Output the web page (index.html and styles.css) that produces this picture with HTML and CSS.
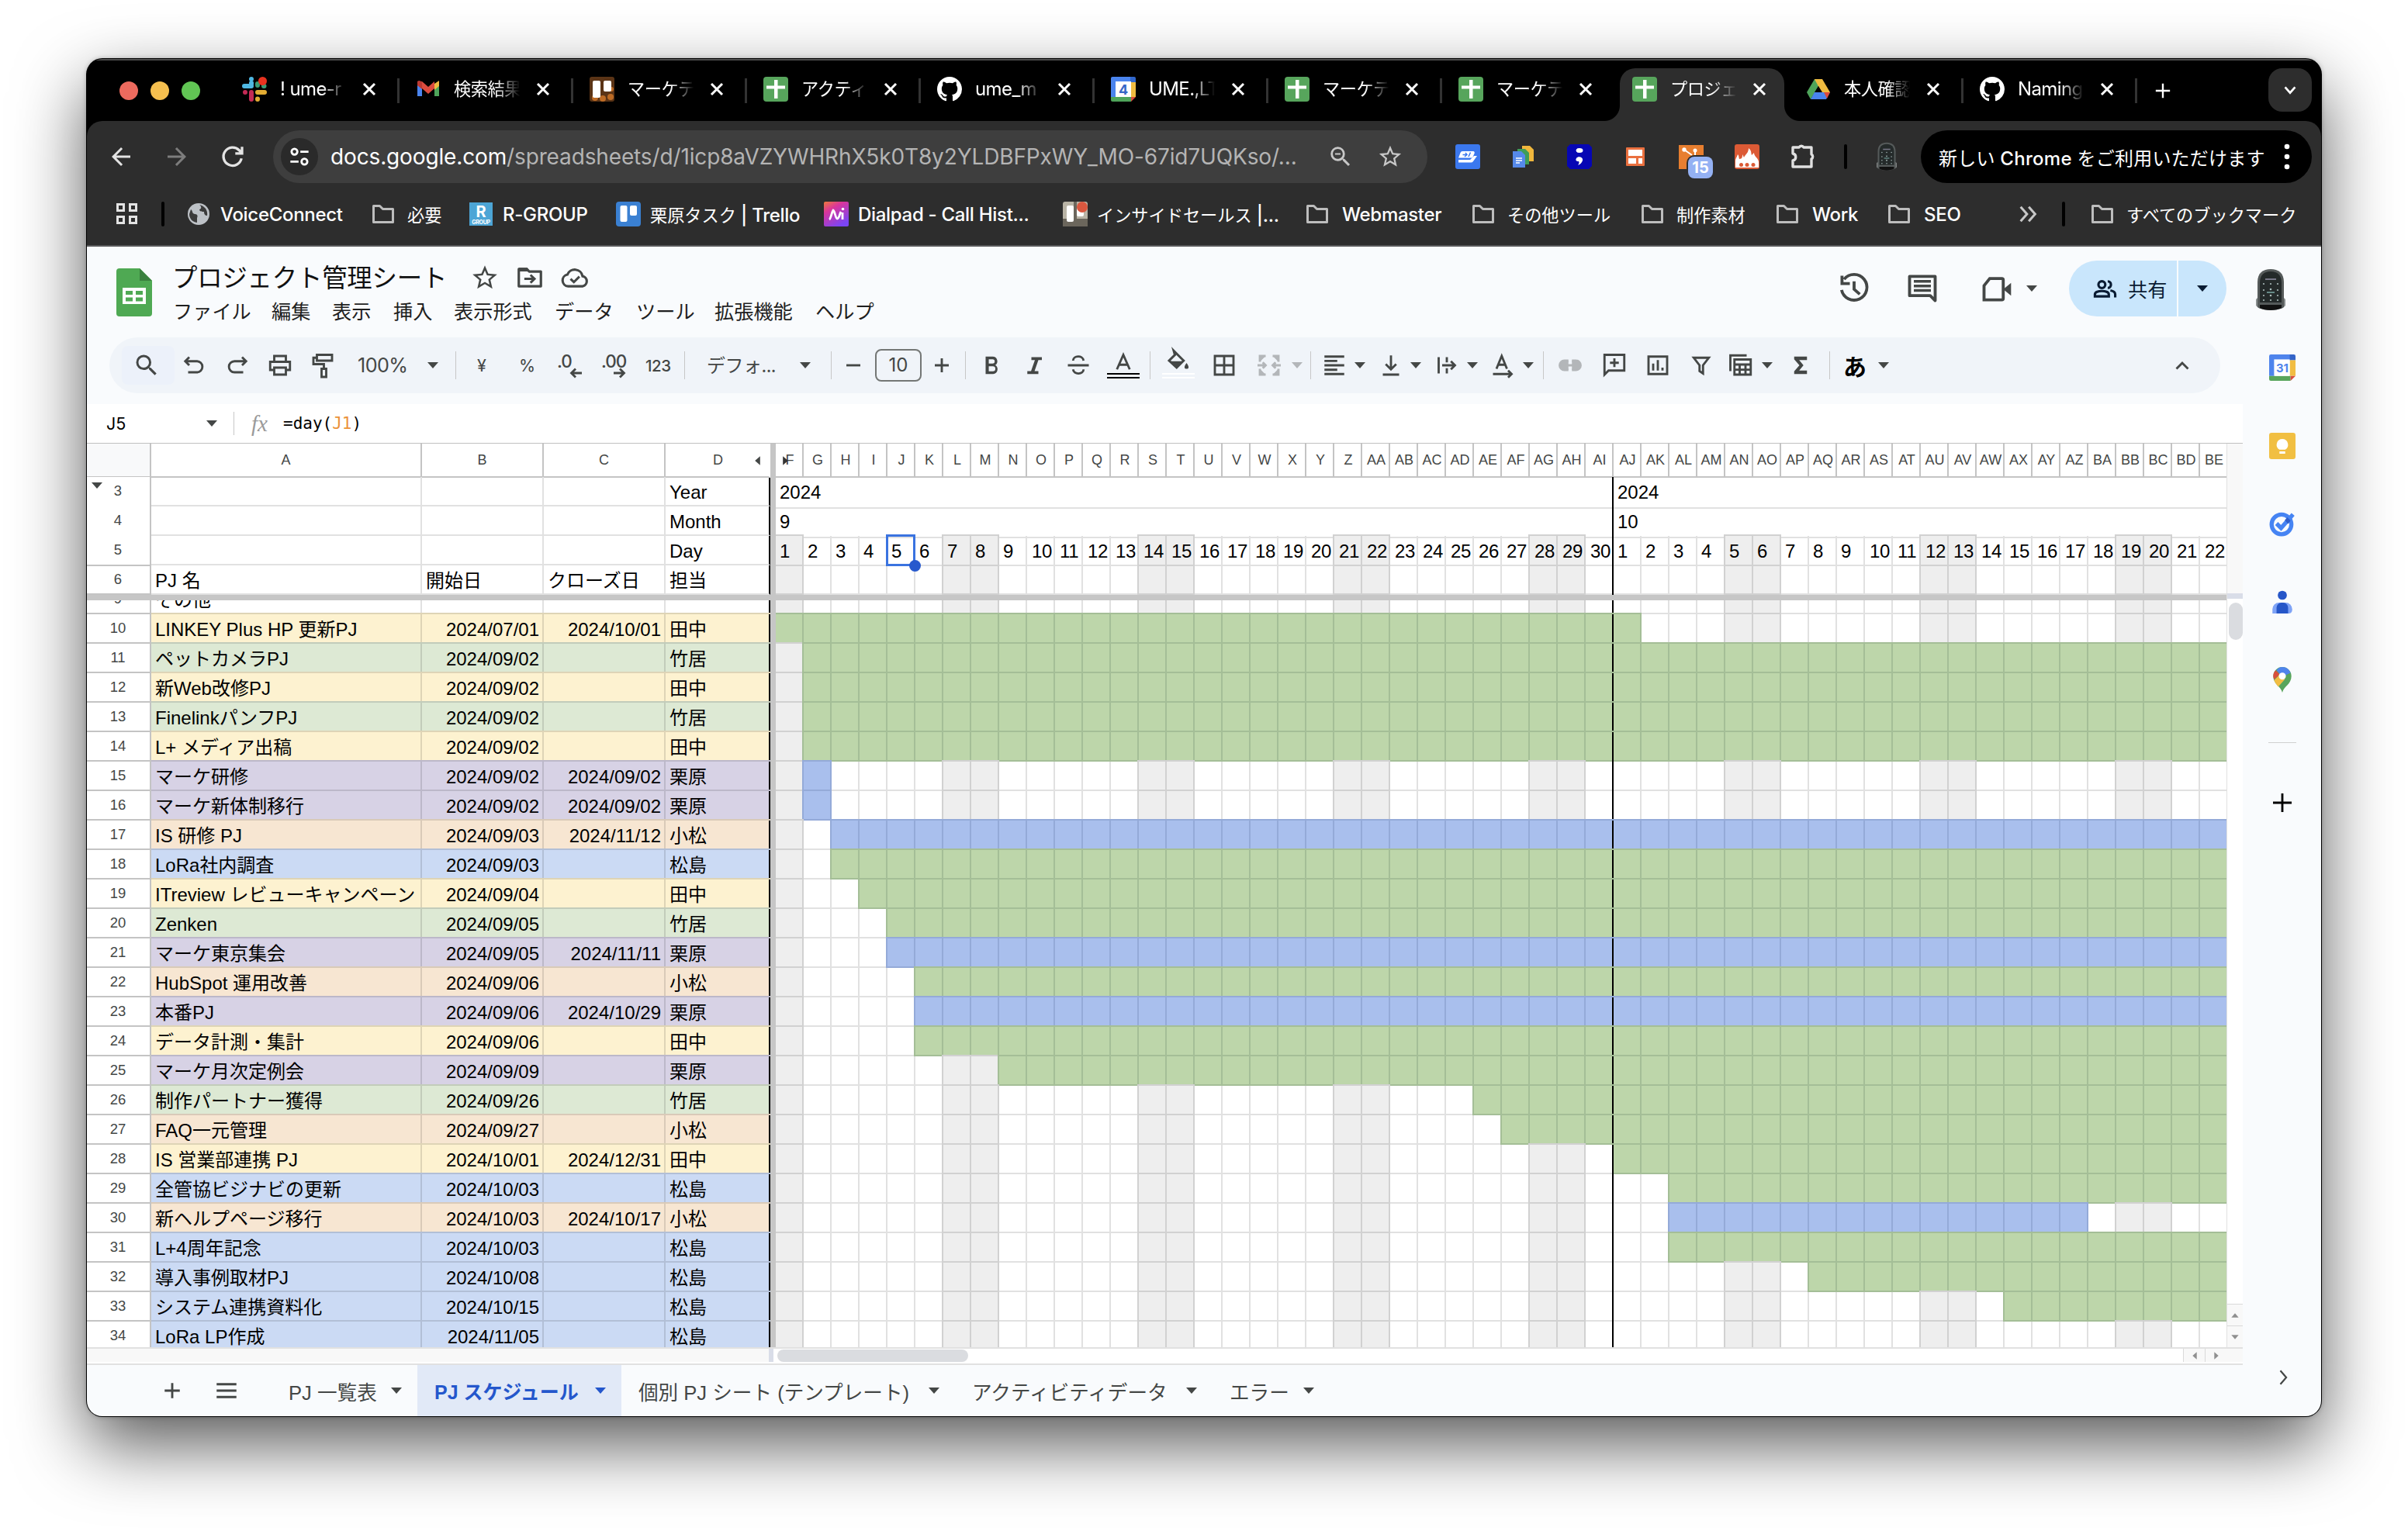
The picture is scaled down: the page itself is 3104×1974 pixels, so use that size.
FILE: index.html
```html
<!DOCTYPE html>
<html lang="ja">
<head>
<meta charset="utf-8">
<title>プロジェクト管理シート</title>
<link rel="stylesheet" href="styles.css">
</head>
<body>
<svg class="sprite" aria-hidden="true">
  <symbol id="caret" viewBox="0 0 18 18"><path d="M2 5h14l-7 8z"/></symbol>
  <symbol id="close" viewBox="0 0 24 24"><path d="M5 5l14 14M19 5L5 19" fill="none" stroke="currentColor" stroke-width="3"/></symbol>
  <symbol id="plus" viewBox="0 0 24 24"><path d="M12 2v20M2 12h20" fill="none" stroke="currentColor" stroke-width="2.6"/></symbol>
  <symbol id="sheets" viewBox="0 0 32 32"><rect width="32" height="32" rx="4" fill="#57a55c"/><path d="M14 4h4.500v24h-4.500zM4 11.500h24v4h-24z" fill="#fff"/></symbol>
  <symbol id="github" viewBox="0 0 16 16"><path fill="#fff" d="M8 0C3.58 0 0 3.58 0 8c0 3.54 2.29 6.53 5.47 7.59.4.07.55-.17.55-.38 0-.19-.01-.82-.01-1.490-2.010.37-2.530-.49-2.690-.94-.09-.23-.48-.94-.82-1.130-.28-.15-.68-.52-.01-.53.63-.01 1.080.58 1.230.82.72 1.210 1.870.87 2.330.66.07-.52.28-.87.51-1.070-1.780-.2-3.640-.89-3.640-3.950 0-.87.31-1.590.82-2.150-.08-.2-.36-1.020.08-2.120 0 0 .67-.21 2.200.82.64-.18 1.320-.27 2-.27.68 0 1.360.09 2 .27 1.530-1.040 2.200-.82 2.200-.82.44 1.100.16 1.920.08 2.120.51.56.82 1.270.82 2.150 0 3.070-1.870 3.750-3.650 3.950.29.25.54.73.54 1.480 0 1.070-.01 1.930-.01 2.200 0 .21.15.46.55.38A8.013 8.013 0 0 0 16 8c0-4.420-3.580-8-8-8z"/></symbol>
  <symbol id="folder" viewBox="0 0 32 32"><path d="M3.500 5.500h8l4 4h13v17h-25z" fill="none" stroke="#bdbdbd" stroke-width="3" stroke-linejoin="round"/></symbol>
  <symbol id="search" viewBox="0 0 24 24"><path d="M15.500 14h-.79l-.28-.27A6.471 6.471 0 0 0 16 9.500 6.500 6.500 0 1 0 9.500 16c1.610 0 3.090-.59 4.230-1.570l.27.28v.79l5 4.990L20.490 19l-4.990-5zm-6 0C7.010 14 5 11.990 5 9.500S7.010 5 9.500 5 14 7.010 14 9.500 11.990 14 9.500 14z"/></symbol>
  <symbol id="star" viewBox="0 0 24 24"><path d="M22 9.240l-7.190-.62L12 2 9.190 8.630 2 9.240l5.460 4.730L5.820 21 12 17.270 18.180 21l-1.630-7.030L22 9.240zM12 15.400l-3.760 2.270 1-4.280-3.320-2.880 4.380-.38L12 6.100l1.710 4.040 4.380.38-3.320 2.880 1 4.280L12 15.400z"/></symbol>
  <symbol id="back" viewBox="0 0 24 24"><path d="M20 11H7.830l5.590-5.590L12 4l-8 8 8 8 1.410-1.410L7.830 13H20v-2z"/></symbol>
  <symbol id="lock" viewBox="0 0 40 56"><path d="M3 50V18C3 6 10 1 20 1s17 5 17 17v32c-6 5-28 5-34 0z" fill="#555a5a"/><path d="M1 40l2-2v12l-2-2zM39 40l-2-2v12l2-2z" fill="#8a8f8f"/><path d="M6 44V19C6 9 11 4 20 4s14 5 14 15v25z" fill="#242a2a"/><path d="M6 47h28v4c-6 4-22 4-28 0z" fill="#111"/><path d="M13 14h14" stroke="#778" stroke-width="2"/><g fill="#a9bab9"><circle cx="11" cy="20" r="1.100"/><circle cx="20" cy="20" r="1.100"/><circle cx="29" cy="20" r="1.100"/><circle cx="11" cy="28" r="1.100"/><circle cx="20" cy="27" r="1.300"/><circle cx="29" cy="28" r="1.100"/><circle cx="11" cy="35" r="1.100"/><circle cx="20" cy="35" r="1.300"/><circle cx="29" cy="35" r="1.100"/><circle cx="11" cy="41" r="1.100"/><circle cx="20" cy="41" r="1.100"/><circle cx="29" cy="41" r="1.100"/></g><path d="M15 31h10" stroke="#7dada8" stroke-width="1.500"/></symbol>
  <symbol id="trello" viewBox="0 0 32 32"><rect width="32" height="32" rx="4" fill="#3a80d2"/><rect x="5.500" y="5" width="9" height="21" rx="2" fill="#fff"/><rect x="18" y="5" width="9" height="13" rx="2" fill="#fff"/></symbol>
</svg>

<div class="window">
  <div class="tabstrip">
    <div class="lights"><i class="red"></i><i class="amber"></i><i class="green"></i></div>
    <div class="tabs">
      <div class="tab">
        <svg viewBox="0 0 32 32"><g stroke-width="6" stroke-linecap="round"><path d="M12 3v0M3 12h9" stroke="#4fb8e3"/><path d="M12 8v1" stroke="#4fb8e3"/><path d="M20 9v2" stroke="#3b9b74"/><path d="M28 12h.5" stroke="#3b9b74"/><path d="M12 20v9M4 20h0" stroke="#c42a55"/><path d="M20 20h9M20 28.500v.5" stroke="#e3ac33"/></g><circle cx="26.500" cy="5.500" r="5.500" fill="#e8321f"/></svg>
        <span class="title">! ume-r</span><svg class="x"><use href="#close"/></svg></div>
      <div class="tab">
        <svg viewBox="0 0 32 32"><path d="M2 7v18h6V12z" fill="#4a84ee"/><path d="M30 7v18h-6V12z" fill="#4ea45a"/><path d="M2 7l6-1 8 7 8-7v9l-8 7-8-7-6-4z" fill="#dd4b3e"/><path d="M24 9l6-4v7l-6 5z" fill="#f0bb40"/><path d="M2 6c2-2 4-1 6 1v9l-6-5z" fill="#bb3a32"/></svg>
        <span class="title jp">検索結果</span><svg class="x"><use href="#close"/></svg></div>
      <div class="tab">
        <svg viewBox="0 0 32 32"><rect width="32" height="32" rx="3" fill="#5b3416"/><g fill="#bd6b25"><circle cx="7" cy="27" r="4"/><circle cx="17" cy="28" r="4"/><circle cx="27" cy="26" r="4"/><circle cx="28" cy="16" r="3"/></g><rect x="4" y="5" width="10" height="22" rx="2" fill="#fff"/><rect x="18" y="5" width="10" height="14" rx="2" fill="#fff"/></svg>
        <span class="title jp">マーケテ</span><svg class="x"><use href="#close"/></svg></div>
      <div class="tab"><svg><use href="#sheets"/></svg><span class="title jp">アクティ</span><svg class="x"><use href="#close"/></svg></div>
      <div class="tab"><svg><use href="#github"/></svg><span class="title">ume_m</span><svg class="x"><use href="#close"/></svg></div>
      <div class="tab">
        <svg viewBox="0 0 32 32"><path d="M0 2a2 2 0 0 1 2-2h24v7H7v19H0z" fill="#4a84ee"/><path d="M25 0h5a2 2 0 0 1 2 2v5h-7z" fill="#3167cc"/><path d="M25 7h7v19h-7z" fill="#f0bb40"/><path d="M0 26h26v6H2a2 2 0 0 1-2-2z" fill="#4ea45a"/><path d="M26 26h6l-6 6z" fill="#dd4b3e"/><path d="M6 6h20v20H6z" fill="#fff"/><text x="16" y="23" font-size="18" font-weight="700" text-anchor="middle" fill="#3767c6">4</text></svg>
        <span class="title">UME.,LT</span><svg class="x"><use href="#close"/></svg></div>
      <div class="tab"><svg><use href="#sheets"/></svg><span class="title jp">マーケテ</span><svg class="x"><use href="#close"/></svg></div>
      <div class="tab nosep"><svg><use href="#sheets"/></svg><span class="title jp">マーケテ</span><svg class="x"><use href="#close"/></svg></div>
      <div class="tab active nosep"><svg><use href="#sheets"/></svg><span class="title jp">プロジェ</span><svg class="x"><use href="#close"/></svg></div>
      <div class="tab">
        <svg viewBox="0 0 32 32"><path d="M11 3h10l-10 18-5 8-5-9z" fill="#4ea45a"/><path d="M11 3h10l10 17H20z" fill="#f0bb40"/><path d="M11 20h20l-5 9H6z" fill="#4a84ee"/><path d="M16 12l5 8H11z" fill="#000"/><path d="M23 20h8l-4 8z" fill="#dd4b3e"/></svg>
        <span class="title jp">本人確認</span><svg class="x"><use href="#close"/></svg></div>
      <div class="tab"><svg><use href="#github"/></svg><span class="title">Naming</span><svg class="x"><use href="#close"/></svg></div>
    </div>
    <svg class="newtab"><use href="#plus"/></svg>
    <div class="tabmenu"><svg viewBox="0 0 24 24"><path d="M5 8l7 8 7-8" fill="none" stroke="#fff" stroke-width="3"/></svg></div>
  </div>

  <div class="navbar">
    <svg class="nav"><use href="#back"/></svg>
    <svg class="nav fwd"><use href="#back"/></svg>
    <svg class="nav" viewBox="0 0 24 24"><path d="M19.500 13.500a7.800 7.800 0 1 1-2-7l2 2.200M20 3.500v5.800h-5.800" fill="none" stroke="#e3e3e3" stroke-width="2.200"/></svg>
    <div class="omnibox">
      <div class="siteinfo"><svg viewBox="0 0 24 24" fill="none" stroke="#fff" stroke-width="2.400"><circle cx="6.500" cy="6.500" r="3.200"/><path d="M13 6.500h9M2 17.500h9"/><circle cx="17.500" cy="17.500" r="3.200"/></svg></div>
      <div class="url"><b>docs.google.com</b>/spreadsheets/d/1icp8aVZYWHRhX5k0T8y2YLDBFPxWY_MO-67id7UQKso/...</div>
      <svg class="obicon" viewBox="0 0 24 24"><use href="#search"/><path d="M7 9.500h5" stroke="#c7c7c7" stroke-width="1.500"/></svg>
      <svg class="obicon"><use href="#star"/></svg>
    </div>
    <div class="exts">
      <svg viewBox="0 0 32 32"><rect width="32" height="32" rx="3" fill="#3b78ee"/><path d="M9 9h14a2 2 0 0 1 1.500 3L22 17.500H4L6.500 11A3 3 0 0 1 9 9z" fill="#fff"/><path d="M4 20h15l5-5h4l-5 7q-1 1.500-3 1.500H4z" fill="#fff"/><path d="M9.500 13.500h5M13 11l2 2.500-3 2.500M19.500 10.500L17 16" stroke="#3b78ee" stroke-width="1.500" fill="none"/></svg>
      <svg viewBox="0 0 32 32"><path d="M14 2h10l5 5v15H14z" fill="#f0b73c"/><path d="M8 6h10l5 5v15H8z" fill="#3f9d58"/><path d="M2 9h11l5 5v16H2z" fill="#5689ea"/><path d="M6 18h8M6 21h8M6 24h5" stroke="#fff" stroke-width="1.500"/></svg>
      <svg viewBox="0 0 32 32"><path d="M4 0h24l4 4v24l-4 4H4l-4-4V4z" fill="#0606b4"/><ellipse cx="16" cy="8" rx="4.500" ry="3" fill="#fff"/><path d="M12 18c2-3 9-2 8 3-1 3-3 5-6 6 2-3 2-5 0-5-3 0-3-2-2-4z" fill="#fff"/></svg>
      <svg viewBox="0 0 32 32"><rect x="4" y="4" width="24" height="24" rx="1" fill="#ea703f"/><path d="M7 7h18v8H7zM7 18h10v7H7zM20 18h5v7h-5z" fill="#fff"/></svg>
      <div class="badged"><svg viewBox="0 0 32 32"><path d="M0 1h32v31H0z" fill="#e77e2f"/><path d="M7 7l10 7M21 7v8" stroke="#fff" stroke-width="2"/><circle cx="7" cy="7" r="2.700" fill="#fff"/><circle cx="21" cy="8" r="2.500" fill="#fff"/></svg><span class="badge">15</span></div>
      <svg viewBox="0 0 32 32"><rect width="32" height="32" rx="3" fill="#dc5a35"/><path d="M1 30V22c0-4 2-5 3-9 2 2 1 4 2 6 4 0 4-3 4-6l2 4c2-4 6-6 6-12 4 3 3 6 4 9l3-3c0 5 6 7 6 12v7z" fill="#fff"/><g fill="#dc5a35"><circle cx="8.500" cy="26.500" r="2.500"/><circle cx="16" cy="26.500" r="2.500"/><circle cx="24" cy="26.500" r="2.500"/></g></svg>
      <svg viewBox="0 0 32 32"><path d="M3 4h8a3.500 3.500 0 0 1 6 0h10v9a3.500 3.500 0 0 1 0 6v10H3v-8c5-1 5-8 0-9z" fill="none" stroke="#e0e0e0" stroke-width="3.400" stroke-linejoin="round"/></svg>
      <i class="vsep"></i>
      <svg class="lock"><use href="#lock"/></svg>
    </div>
    <div class="update"><span><em>新しい</em> Chrome <em>をご利用いただけます</em></span><svg viewBox="0 0 8 40" fill="#fff"><circle cx="4" cy="7" r="3.300"/><circle cx="4" cy="20" r="3.300"/><circle cx="4" cy="33" r="3.300"/></svg></div>
  </div>

  <div class="bookmarks">
    <svg class="apps" viewBox="0 0 28 28" fill="none" stroke="#e3e3e3" stroke-width="3"><path d="M1.500 1.500h8v8h-8zM17.500 1.500h8v8h-8zM1.500 17.500h8v8h-8zM17.500 17.500h8v8h-8z"/></svg>
    <i class="vsep"></i>
    <div class="bm"><svg viewBox="0 0 32 32"><circle cx="16" cy="16" r="14" fill="#bdc1c6"/><path d="M6 10c3 2 1 5 5 6 4 0 4 3 3 5v6c-6-1-10-5-10-11zM17 4c3 2 3 5 0 6 0 3 4 3 6 3 0 4 2 5 4 5 1-6-2-12-10-14z" fill="#3b3b3b"/></svg>VoiceConnect</div>
    <div class="bm jp"><svg><use href="#folder"/></svg>必要</div>
    <div class="bm"><svg viewBox="0 0 32 32"><rect x="1" y="1" width="30" height="30" fill="#4ca5d6"/><text x="16" y="20" font-size="20" font-weight="700" text-anchor="middle" fill="#fff">R</text><text x="16" y="29" font-size="7" font-weight="700" text-anchor="middle" fill="#fff">GROUP</text></svg>R-GROUP</div>
    <div class="bm"><svg><use href="#trello"/></svg><span><em>栗原タスク</em> | Trello</span></div>
    <div class="bm"><svg viewBox="0 0 32 32"><defs><linearGradient id="dp" x1="0" y1="0" x2=".6" y2="1"><stop offset="0" stop-color="#ef7a3a"/><stop offset=".35" stop-color="#d9359b"/><stop offset="1" stop-color="#7b45f5"/></linearGradient></defs><rect width="32" height="32" rx="2" fill="url(#dp)"/><path d="M7 23c2-1 3-9 5-12 2 0 3 11 5 11 3 0 3-6 5-9M24 14v9" fill="none" stroke="#fff" stroke-width="2.800"/><circle cx="24.500" cy="9.500" r="1.800" fill="#fff"/></svg><span>Dialpad - Call Hist...</span></div>
    <div class="bm"><svg viewBox="0 0 32 32"><rect width="32" height="32" rx="3" fill="#b9b4a6"/><path d="M0 22h32v10H0zM14 0h4v22h-4z" fill="#6b665c"/><rect x="5" y="5" width="9" height="21" rx="2" fill="#fff"/><rect x="18" y="8" width="9" height="11" rx="2" fill="#fff"/><circle cx="25" cy="7" r="7" fill="#d9573f"/></svg><span><em>インサイドセールス</em> |...</span></div>
    <div class="bm dir"><svg><use href="#folder"/></svg>Webmaster</div>
    <div class="bm jp"><svg><use href="#folder"/></svg>その他ツール</div>
    <div class="bm jp"><svg><use href="#folder"/></svg>制作素材</div>
    <div class="bm dir"><svg><use href="#folder"/></svg>Work</div>
    <div class="bm dir"><svg><use href="#folder"/></svg>SEO</div>
    <svg class="more" viewBox="0 0 24 24"><path d="M4 4l7 8-7 8M13 4l7 8-7 8" fill="none" stroke="#c7c7c7" stroke-width="2.600"/></svg>
    <i class="vsep"></i>
    <div class="bm jp"><svg><use href="#folder"/></svg>すべてのブックマーク</div>
  </div>

  <div class="app">
    <div class="header">
      <svg class="logo" viewBox="0 0 46 62"><path d="M4 0h26l16 16v42a4 4 0 0 1-4 4H4a4 4 0 0 1-4-4V4a4 4 0 0 1 4-4z" fill="#4fa953"/><path d="M30 0l16 16H30z" fill="#3a803e"/><path d="M8 25h30v21H8zM12 29v5h9v-5zM25 29v5h9v-5zM12 37.500v5h9v-5zM25 37.500v5h9v-5z" fill="#fff" fill-rule="evenodd"/></svg>
      <div class="names">
        <div class="doc"><span class="docname">プロジェクト管理シート</span>
          <svg><use href="#star"/></svg>
          <svg viewBox="0 0 24 24"><path d="M3 5h6.500l2 2H21v12H3z" fill="none" stroke="#444746" stroke-width="2" stroke-linejoin="round"/><path d="M3 4h7l2 3H3z"/><path d="M7.500 13h8M12.500 9.800l3.300 3.200-3.300 3.200" fill="none" stroke="#444746" stroke-width="1.900"/></svg>
          <svg viewBox="0 0 24 24"><path d="M6.500 19a4.800 4.800 0 0 1-.6-9.500 6.500 6.500 0 0 1 12.400 1.300A4.200 4.200 0 0 1 18.500 19z" fill="none" stroke="#444746" stroke-width="2"/><path d="M8.500 13l2.700 2.600 4.500-4.500" fill="none" stroke="#444746" stroke-width="1.900"/></svg>
        </div>
        <div class="menu"><span>ファイル</span><span>編集</span><span>表示</span><span>挿入</span><span>表示形式</span><span>データ</span><span>ツール</span><span>拡張機能</span><span>ヘルプ</span></div>
      </div>
      <div class="actions">
        <svg viewBox="0 0 24 24" fill="none" stroke="#444746" stroke-width="2.100"><path d="M5 5.500A9 9 0 1 1 3.200 13M3.500 3v5.500H9M12 7v5.500l4 3.500"/></svg>
        <svg viewBox="0 0 24 24"><path d="M3 3.500h18v17L17.500 17H3z" fill="none" stroke="#444746" stroke-width="2.100" stroke-linejoin="round"/><path d="M6 7h12M6 10.200h12M6 13.400h12" stroke="#444746" stroke-width="1.900"/></svg>
        <svg viewBox="0 0 24 24"><path d="M7 5h8.500a1 1 0 0 1 1 1v13a1 1 0 0 1-1 1H3V10z" fill="none" stroke="#444746" stroke-width="2.100"/><path d="M16.500 12.500L22 8v9z"/></svg>
        <svg class="caret"><use href="#caret"/></svg>
        <div class="share"><div class="sharebtn"><svg viewBox="0 0 24 24" fill="none" stroke="#0a1c33" stroke-width="2.300"><circle cx="9" cy="8" r="3.200"/><path d="M2.500 19v-2c0-4 13-4 13 0v2zM14.500 4.900c4 0 4 6.200 0 6.200M17 13.500c3 .6 4.500 1.700 4.500 3.500v3"/></svg>共有</div><div class="sharemore"><svg class="caret"><use href="#caret"/></svg></div></div>
        <svg class="avatar"><use href="#lock"/></svg>
      </div>
    </div>

    <div class="body">
      <div class="main">
        <div class="toolbar">
          <span class="hit"><svg><use href="#search"/></svg></span>
          <svg viewBox="0 0 24 24" class="ln"><path d="M8 5L4.500 8.500 8 12M5 8.500h9.500a4.700 4.700 0 0 1 0 9.500H7"/></svg>
          <svg viewBox="0 0 24 24" class="ln"><path d="M16 5l3.500 3.500L16 12M19 8.500H9.500a4.700 4.700 0 0 0 0 9.500H17"/></svg>
          <svg viewBox="0 0 24 24" class="ln"><path d="M7 8V4h10v4M7 16H3.500V9h17v7H17M7 14h10v6H7z"/></svg>
          <svg viewBox="0 0 24 24" class="ln"><path d="M7 3h13v5H7zM7 5.500H4V11h9v4M11 15h4v7h-4z"/></svg>
          <span class="t zoom">100%</span>
          <svg class="caret"><use href="#caret"/></svg>
          <i class="sep"></i>
          <span class="t sm">¥</span><span class="t sm">%</span>
          <span class="dec">.0<svg viewBox="0 0 16 14" class="ln"><path d="M16 7H3M8 1.500L2.500 7 8 12.500"/></svg></span>
          <span class="dec">.00<svg viewBox="0 0 16 14" class="ln"><path d="M0 7h13M8 1.500L13.500 7 8 12.500"/></svg></span>
          <span class="t num">123</span>
          <i class="sep"></i>
          <span class="t font">デフォ...</span>
          <svg class="caret"><use href="#caret"/></svg>
          <i class="sep"></i>
          <svg viewBox="0 0 24 24" class="ln"><path d="M6 12h12"/></svg>
          <span class="size">10</span>
          <svg viewBox="0 0 24 24" class="ln"><path d="M6 12h12M12 6v12"/></svg>
          <i class="sep"></i>
          <svg viewBox="0 0 24 24"><path d="M7 4.500h6a4 4 0 0 1 2.300 7.300A4.200 4.200 0 0 1 13.500 19.500H7zm2.700 2.400v3.600H13a1.800 1.800 0 0 0 0-3.600zm0 5.900v4.300h3.500a2.150 2.150 0 0 0 0-4.300z"/></svg>
          <svg viewBox="0 0 24 24"><path d="M9 5h9v2.500h-3l-3.300 9.500H15v2.500H5.500V17h3.200L12 7.500H9z"/></svg>
          <svg viewBox="0 0 24 24" class="ln"><path d="M3 12h18M16.500 8c-.6-5-9-4.500-9 0M7.500 15.500c.5 5 9 4.500 9 0"/></svg>
          <span class="fill"><svg viewBox="0 0 24 24" class="ln"><path d="M6.500 21.500L12 9l5.500 12.500M8.500 17.500h7"/></svg><i></i><i></i></span>
          <i class="sep"></i>
          <span class="fill white"><svg viewBox="0 0 24 24"><g transform="translate(0 3.500)"><path d="M8 2l8.500 8.500-6 6L4 10.500 9 5.500z" fill="none" stroke="#444746" stroke-width="2"/><path d="M5 11h11l-5.500 5.500zM19 12.500c3 4 1.500 5 0 5s-3-1 0-5z"/></g></svg><i></i><i></i></span>
          <svg viewBox="0 0 24 24" class="ln"><path d="M4 4h16v16H4zM12 4v16M4 12h16"/></svg>
          <svg viewBox="0 0 24 24" class="ln off"><path d="M9 4H4v5M15 4h5v5M9 20H4v-5M15 20h5v-5M2 12h7M6.500 9.500L9 12l-2.500 2.500M22 12h-7M17.500 9.500L15 12l2.500 2.500"/></svg>
          <svg class="caret off"><use href="#caret"/></svg>
          <i class="sep"></i>
          <svg viewBox="0 0 24 24" class="ln"><path d="M3.500 4.500h17M3.500 8.200h11M3.500 12h17M3.500 15.800h11M3.500 19.500h17"/></svg>
          <svg class="caret"><use href="#caret"/></svg>
          <svg viewBox="0 0 24 24" class="ln"><path d="M12 3.500v12M7.500 11l4.500 4.500 4.500-4.500M5 20h14"/></svg>
          <svg class="caret"><use href="#caret"/></svg>
          <svg viewBox="0 0 24 24" class="ln"><path d="M5 5v14M12 5v4.500M12 14.500V19M8 12h11M15.500 8.500L19 12l-3.500 3.500"/></svg>
          <svg class="caret"><use href="#caret"/></svg>
          <svg viewBox="0 0 24 24" class="ln"><path d="M6 15l4.500-11L15 15M7.500 11.500h6M3 19.500h16M16 16.500l3 3-3 3"/></svg>
          <svg class="caret"><use href="#caret"/></svg>
          <i class="sep"></i>
          <svg viewBox="0 0 24 24" class="ln off"><path d="M10.500 8H7a4 4 0 0 0 0 8h3.500M13.500 8H17a4 4 0 0 1 0 8h-3.500M8.500 12h7"/></svg>
          <svg viewBox="0 0 24 24" class="ln"><path d="M3.500 20V3h17v13.500H7zM12 6v7.500M8.200 9.800h7.600"/></svg>
          <svg viewBox="0 0 24 24" class="ln"><path d="M4 4.500h16v15H4zM8 16.500v-6M12 16.500v-9M16 16.500v-2.500"/></svg>
          <svg viewBox="0 0 24 24" class="ln"><path d="M5.500 5.500h13L13.500 12v7l-3-2v-5z"/></svg>
          <svg viewBox="0 0 24 24" class="ln"><path d="M3 17V3.500h14M6.500 7h14v13h-14zM6.500 11.300h14M6.500 15.700h14M11 11.300V20M16 11.300V20"/></svg>
          <svg class="caret"><use href="#caret"/></svg>
          <svg viewBox="0 0 24 24"><path d="M6.500 4.500h11v3h-6.700L14.500 12l-3.700 4.500h6.700v3h-11v-2.300L11 12 6.500 6.800z"/></svg>
          <i class="sep"></i>
          <span class="t ime">あ</span>
          <svg class="caret"><use href="#caret"/></svg>
          <svg viewBox="0 0 24 24" class="ln"><path d="M7 15l5-5 5 5"/></svg>
        </div>

        <div class="formula"><span class="cellref">J5</span><svg class="caret"><use href="#caret"/></svg><i class="sep"></i><span class="fx">fx</span><span class="code">=day(<b>J1</b>)</span></div>

        <div class="sheet">
          <div class="grid">
            <div class="frozen" id="frozen"></div>
            <div class="freezebar"></div>
            <div class="scroller"><div id="rows"></div></div>
          </div>
          <div class="vscroll"><div class="vtop"></div><div class="handle"></div><div class="thumb"></div><div class="arrow"><svg class="up"><use href="#caret"/></svg></div><div class="arrow"><svg><use href="#caret"/></svg></div></div>
        </div>
        <div class="hscroll"><div class="hleft"></div><div class="handle"></div><div class="track"><div class="thumb"></div></div><div class="arrow"><svg class="left"><use href="#caret"/></svg></div><div class="arrow"><svg class="right"><use href="#caret"/></svg></div><div class="corner"></div></div>
      </div>
      <div class="side">
        <svg viewBox="0 0 32 32"><path d="M0 2a2 2 0 0 1 2-2h24v7H7v19H0z" fill="#4f84ec"/><path d="M25 0h5a2 2 0 0 1 2 2v5h-7z" fill="#3464c8"/><path d="M25 7h7v19h-7z" fill="#f1bd43"/><path d="M0 26h26v6H2a2 2 0 0 1-2-2z" fill="#58a55c"/><path d="M26 26h6l-6 6z" fill="#d94f3d"/><path d="M6 6h19v20H6z" fill="#fff"/><text x="16" y="21.500" font-size="14" font-weight="700" text-anchor="middle" fill="#4f84ec">31</text></svg>
        <svg viewBox="0 0 32 32"><rect width="32" height="32" rx="3" fill="#f1bf42"/><path d="M16 7.500a7 7 0 0 1 3.500 13h-7a7 7 0 0 1 3.500-13zM12.500 22.500h7v3h-7z" fill="#fff"/></svg>
        <svg viewBox="0 0 32 32"><circle cx="15" cy="17" r="12" fill="none" stroke="#4684f3" stroke-width="5"/><path d="M9 16l5.500 5.500L29 5" fill="none" stroke="#4684f3" stroke-width="5"/><path d="M22 8.500l4 4-3 4-4-4.500z" fill="#2f5ecb"/></svg>
        <svg viewBox="0 0 32 32"><circle cx="16" cy="8" r="5.500" fill="#2656c8"/><path d="M4 30v-5a8 8 0 0 1 8-8h8a8 8 0 0 1 8 8c0 3-1 5-4 5z" fill="#7fa3f6"/><path d="M9 30v-7a6 6 0 0 1 6-6h2a6 6 0 0 1 6 6v7z" fill="#2656c8"/></svg>
        <svg viewBox="0 0 32 32"><path d="M16 32c-2-8-11-10-11-20A11 11 0 0 1 16 1a11 11 0 0 1 11 11c0 10-9 12-11 20z" fill="#58a55c"/><path d="M16 1a11 11 0 0 1 10 7l-10 5-7-8c2-3 4-4 7-4z" fill="#4f84ec"/><path d="M8 5l5 5-7 6C4 12 5 8 8 5z" fill="#d94f3d"/><path d="M6 17l7-7 6 6-8 9c-2-3-4-5-5-8z" fill="#f1bd43"/><circle cx="16" cy="12" r="4.300" fill="#fff"/></svg>
        <hr>
        <svg class="add" viewBox="0 0 24 24"><path d="M12 0v24M0 12h24" stroke="#000" stroke-width="2.800"/></svg>
      </div>
    </div>

    <div class="sheettabs">
      <svg viewBox="0 0 24 24" class="ln"><path d="M12 5.500v13M5.500 12h13"/></svg>
      <svg viewBox="0 0 24 24" class="ln"><path d="M3.500 6.500h17M3.500 12h17M3.500 17.500h17"/></svg>
      <span class="st">PJ 一覧表<svg class="caret"><use href="#caret"/></svg></span>
      <span class="st on">PJ スケジュール<svg class="caret"><use href="#caret"/></svg></span>
      <span class="st">個別 PJ シート (テンプレート)<svg class="caret"><use href="#caret"/></svg></span>
      <span class="st">アクティビティデータ<svg class="caret"><use href="#caret"/></svg></span>
      <span class="st">エラー<svg class="caret"><use href="#caret"/></svg></span>
      <svg viewBox="0 0 24 24" class="ln expand"><path d="M9 4.500l6.500 7.500L9 19.500"/></svg>
    </div>
  </div>
</div>
<script src="sheet.js"></script>
</body>
</html>
```
FILE: styles.css
```css
* { box-sizing: border-box; }
body { margin: 0; height: 1974px; background: #fff; overflow: hidden; font-family: Inter, "Noto Sans CJK JP", sans-serif; }
em, b { font-style: normal; font-weight: inherit; }
svg { display: block; flex: none; }
.sprite { position: absolute; width: 0; height: 0; }

.window { width: 2880px; height: 1750px; margin: 76px 0 0 112px; border-radius: 20px; background: #000; overflow: hidden; display: flex; flex-direction: column; box-shadow: 0 0 0 1px #000, 0 0 6px rgba(0,0,0,.3), 0 36px 90px rgba(0,0,0,.66); }

/* browser tab strip */
.tabstrip { height: 80px; background: #000; border-top: 2px solid #4d4d4d; display: flex; align-items: flex-start; }
.lights { display: flex; gap: 16px; width: 178px; padding: 27px 0 0 42px; }
.lights i { width: 24px; height: 24px; border-radius: 50%; }
.red { background: #ed6a5e; }
.amber { background: #f5bf4f; }
.green { background: #61c554; }
.tabs { display: flex; }
.tab { width: 224px; height: 78px; padding: 0 0 4px 22px; display: flex; align-items: center; position: relative; color: #fff; }
.tab > svg { width: 32px; height: 32px; }
.tab::after { content: ""; position: absolute; right: -1px; top: 23px; width: 3px; height: 32px; background: #333; }
.tab.nosep::after { display: none; }
.tab .title { width: 88px; margin: 0 15px 0 17px; font-size: 24px; line-height: 34px; letter-spacing: -.6px; white-space: nowrap; -webkit-mask-image: linear-gradient(90deg, #000 62%, transparent 97%); mask-image: linear-gradient(90deg, #000 62%, transparent 97%); }
.tab .title.jp { font-size: 22.200px; letter-spacing: -.4px; }
.tab > .x { width: 24px; height: 24px; }
.tab.active::before { content: ""; position: absolute; z-index: 0; left: 6px; top: 10px; width: 212px; height: 68px; background: #2d2d2d; border-radius: 20px 20px 0 0; }
.tab.active::after { display: block; z-index: 0; left: -14px; right: auto; top: 58px; width: 252px; height: 20px; background: radial-gradient(circle at 0 0, transparent 19.500px, #2d2d2d 20.500px) 0 0 / 20px 20px no-repeat, radial-gradient(circle at 100% 0, transparent 19.500px, #2d2d2d 20.500px) 100% 0 / 20px 20px no-repeat; }
.tab.active > * { position: relative; z-index: 1; }
.newtab { width: 22px; height: 22px; color: #fff; margin: 28px 0 0 23px; }
.tabmenu { width: 56px; height: 56px; margin: 10px 12px 0 auto; border-radius: 18px; background: #2d2d2d; display: grid; place-items: center; }
.tabmenu svg { width: 22px; height: 22px; }

/* address row */
.navbar { height: 92px; display: flex; align-items: center; background: #2d2d2d; border-radius: 20px 20px 0 0; }
.nav { width: 36px; height: 36px; margin-right: 36px; fill: #e3e3e3; }
.nav:first-child { margin-left: 26px; }
.fwd { transform: scaleX(-1); fill: #7d7d7d; }
.nav:nth-child(3) { margin-right: 34px; }
.omnibox { width: 1488px; height: 68px; border-radius: 34px; background: #3e3e3e; display: flex; align-items: center; padding-left: 10px; }
.siteinfo { width: 48px; height: 48px; border-radius: 50%; background: #2a2a2a; display: grid; place-items: center; }
.siteinfo svg { width: 28px; height: 28px; }
.url { width: 1277px; padding-left: 16px; font-size: 28px; letter-spacing: -.14px; color: #b4b4b4; white-space: nowrap; }
.url b { color: #fff; }
.obicon { width: 34px; height: 34px; margin: 0 6px 0 24px; fill: #c7c7c7; }
.exts { display: flex; gap: 40px; margin-left: 36px; align-items: center; }
.exts svg { width: 32px; height: 32px; }
.exts .vsep { margin: 0 -3px; }
.exts .lock { width: 28px; height: 38px; }
.badged { position: relative; }
.badge { position: absolute; left: 12px; top: 16px; width: 32px; height: 28px; border-radius: 8px; background: #94b1f3; color: #fff; font: 700 20px/28px Inter, sans-serif; text-align: center; box-shadow: 0 0 0 2px #2d2d2d; }
.vsep { width: 4px; height: 32px; background: #000; border-radius: 2px; }
.update { width: 504px; height: 68px; margin-left: auto; margin-right: 12px; border-radius: 34px; background: #000; color: #fff; display: flex; align-items: center; padding-left: 23px; font-size: 24px; letter-spacing: .3px; font-weight: 500; white-space: nowrap; }
.update span { width: 445px; }
.update em { font-size: 24px; letter-spacing: .2px; font-weight: 400; }
.update svg { width: 8px; height: 40px; }

/* bookmarks */
.bookmarks { height: 70px; padding: 0 0 12px 38px; background: #2d2d2d; border-bottom: 2px solid #58585a; display: grid; align-items: center; grid-template-columns: 58px 32px 238px 126px 190px 268px 308px 312px 214px 218px 174px 144px 168px 58px 36px 1fr; color: #fff; }
.apps { width: 28px; height: 28px; }
.more { width: 28px; height: 28px; }
.bm { display: flex; align-items: center; gap: 12px; font-size: 24px; font-weight: 500; white-space: nowrap; letter-spacing: -.3px; }
.bm.dir { gap: 16px; }
.bm.jp { font-size: 22.200px; gap: 15px; font-weight: 400; letter-spacing: 0; }
.bm em { font-size: 22.200px; font-weight: 400; letter-spacing: 0; }
.bm svg { width: 32px; height: 32px; }

/* app header */
.app { flex: 1; background: #f9fbfd; display: flex; flex-direction: column; fill: #444746; }
.header { height: 117px; display: flex; font-family: "Noto Sans CJK JP", sans-serif; }
.logo { width: 46px; height: 62px; margin: 28px 28px 0 38px; }
.names { flex: 1; }
.doc { display: flex; align-items: center; height: 48px; margin-top: 14px; }
.docname { width: 384px; margin-left: -2px; font-size: 32.400px; line-height: 48px; letter-spacing: -.2px; color: #111; white-space: nowrap; }
.doc svg { width: 38px; height: 38px; margin-right: 20px; margin-top: 3px; }
.menu { display: grid; grid-template-columns: 127px 78px 79px 78px 130px 105px 101px 130px 90px; font-size: 25.200px; line-height: 40px; color: #1f1f1f; margin-left: -1px; }
.menu span { white-space: nowrap; }
.actions { display: flex; align-items: center; height: 108px; }
.actions > svg { width: 44px; height: 44px; margin-right: 44px; }
.actions > svg:nth-of-type(2) { margin-right: 52px; }
.actions > svg:nth-of-type(3) { margin-right: 14px; }
.actions > .caret { width: 18px; height: 18px; margin-right: 39px; }
.caret { width: 18px; height: 18px; }
.share { display: flex; width: 203px; height: 72px; border-radius: 36px; background: #c9e6fc; overflow: hidden; fill: #0a1c33; }
.sharebtn { width: 141px; border-right: 2px solid #f9fbfd; display: flex; align-items: center; gap: 13px; padding-left: 30px; font-size: 25.200px; color: #0a1c33; }
.sharebtn svg { width: 33px; height: 33px; }
.sharemore { padding: 27px 0 0 22px; }
.actions > .avatar { width: 42px; height: 56px; margin: 4px 44px 0 36px; }

.body { display: flex; height: 1325px; }
.main { width: 2779px; }
.toolbar { width: 2721px; height: 72px; margin: 0 0 14px 29px; padding-left: 30px; border-radius: 36px; background: #f0f4f9; display: grid; align-items: center; grid-template-columns: 61px 56px 55px 55px 63px 88px 38px 27px 54px 48px 57px 59px 50px 29px 118px 42px 11px 46px 68px 48px 16px 56px 56px 55px 55px 16px 62px 58px 45px 26px 13px 42px 31px 41px 31px 42px 31px 41px 28px 17px 57px 56px 56px 51px 43px 34px 55px 19px 42px 376px 36px; }
.toolbar svg { width: 36px; height: 36px; }
.toolbar .caret, .sheettabs .caret { width: 18px; height: 18px; }
.ln { fill: none; stroke: #444746; stroke-width: 1.900; }
.ln.off { stroke: #b3b6b9; }
.off { fill: #b3b6b9; }
.hit { width: 68px; height: 50px; margin-left: -14px; padding: 7px 14px; background: #ecf1fa; border-radius: 8px; }
.sep { width: 1px; height: 36px; background: #c7c7c7; }
.t { color: #444746; white-space: nowrap; font-size: 25.200px; }
.zoom { letter-spacing: -.6px; }
.sm { font-size: 21.500px; padding-left: 1px; }
.num { font-size: 20.500px; letter-spacing: -.5px; font-weight: 500; }
.font { font-family: "Noto Sans CJK JP", sans-serif; font-size: 24px; margin-top: -4px; letter-spacing: -.5px; }
.ime { font: 700 30px "Noto Sans CJK JP", sans-serif; color: #000; margin-left: -1px; }
.dec { position: relative; height: 52px; padding-left: 2px; font-size: 22.500px; line-height: 42px; font-weight: 500; letter-spacing: -1px; color: #444746; }
.toolbar .dec svg { width: 16px; height: 14px; position: absolute; left: 18px; top: 29px; stroke-width: 2.800; }
.size { width: 60px; height: 42px; border: 2px solid #747775; border-radius: 8px; text-align: center; font-size: 24px; line-height: 38px; color: #444746; }
.fill { width: 42px; height: 58px; display: flex; flex-direction: column; align-items: center; gap: 3px; }
.fill svg { margin: 2px 0 -2px; }
.fill i { width: 42px; height: 2px; background: #000; }
.fill.white i { background: #fff; }

.formula { height: 51px; background: #fff; border-bottom: 1px solid #c0c0c0; display: grid; grid-template-columns: 127px 37px 20px 43px 1fr; align-items: center; padding-left: 25px; font-size: 21.500px; color: #000; }
.fx { font: italic 29px "Liberation Serif", serif; color: #9a9a9a; padding-left: 3px; }
.formula .sep { height: 30px; }
.code { font-family: "DejaVu Sans Mono", monospace; font-size: 21px; padding-left: 1px; }
.code b { color: #eb9238; }

/* sheet */
.sheet { display: flex; height: 1165px; background: #fff; font-family: "Liberation Sans", "Noto Sans CJK JP", sans-serif; }
.grid { width: 2758px; overflow: hidden; position: relative; }
.scroller { height: 963px; overflow: hidden; }
#rows { margin-top: -20px; }
.freezebar { height: 7px; background: #c6c6c6; position: relative; z-index: 2; }
.row { display: grid; grid-template-columns: 83px 349px 157px 157px 135px 7px 1872px; height: 38px; }
.head { height: 43px; color: #444746; font-size: 18px; text-align: center; line-height: 42px; }
.head > div, .head .timeline span { border-right: 2px solid #c4c4c4; border-bottom: 2px solid #c4c4c4; background: #fff; }
.head > .timeline { border: 0; }
.head .corner { background: #f8f9fa; }
.head .timeline span { padding-left: 2px; font-size: 18px; color: #444746; white-space: nowrap; }
.head .d { position: relative; padding-left: 2px; border-right-color: #fff; }
.head .d svg { position: absolute; right: 7px; top: 14px; width: 15px; height: 16px; transform: rotate(90deg); }
.head .timeline { position: relative; }
.head .timeline svg { position: absolute; left: 5px; top: 14px; width: 15px; height: 16px; transform: rotate(-90deg); fill: #333; }
.rn { border-right: 2px solid #c4c4c4; border-bottom: 2px solid #c4c4c4; background: #fff; color: #444746; font-size: 18.500px; line-height: 36px; text-align: center; position: relative; padding-right: 1px; }
.rn svg { position: absolute; left: 4px; top: 2px; width: 18px; height: 18px; }
.cell { border-right: 2px solid #e1e1e1; border-bottom: 2px solid #e1e1e1; font-size: 24px; line-height: 38px; padding: 1px 5px 0; white-space: nowrap; color: #000; height: 38px; }
.cell.r { text-align: right; padding-right: 4px; }
.cell.d { border-right-color: #000; }
.tint .cell { margin-top: -2px; height: 40px; border-top: 2px solid rgba(0,0,0,.12); border-bottom-color: rgba(0,0,0,.12); border-right-color: rgba(0,0,0,.12); }
.tint .cell.d { border-right: 0; box-shadow: inset -2px 0 0 #000; }
.yellow .cell { background: #fdf2d0; }
.leaf .cell { background: #dde9d4; }
.purple .cell { background: #d7d2e5; }
.orange .cell { background: #f7e6d2; }
.sky .cell { background: #cbdaf4; }
.bar { background: #c6c6c6; }
.head > .bar { border: 0; background: #c6c6c6; }
.timeline { display: grid; grid-template-columns: repeat(52, 36px); grid-template-rows: 100%; clip-path: inset(-2px 0 0 0); font-size: 24px; color: #000; }
.lines { background: linear-gradient(#e1e1e1, #e1e1e1) 0 100% / 100% 2px no-repeat, repeating-linear-gradient(90deg, transparent 0 34px, #e1e1e1 34px 36px); }
.merged { border-bottom: 2px solid #e1e1e1; }
.merged span { padding: 1px 0 0 5px; line-height: 38px; }
.day { grid-row: 1; padding: 1px 0 0 5px; line-height: 38px; white-space: nowrap; z-index: 1; }
.day.two { padding-left: 6px; letter-spacing: -.3px; }
.seg { grid-row: 1; margin: -2px 0 0 -2px; border: 2px solid; }
.seg.wk { border-color: #d1d1d1; background: repeating-linear-gradient(90deg, #eee 0 34px, #d1d1d1 34px 36px); }
.seg.go { border-color: #a4be97; background: repeating-linear-gradient(90deg, #bdd6aa 0 34px, #a4be97 34px 36px); }
.seg.done { border-color: #94aad8; background: repeating-linear-gradient(90deg, #a9bfed 0 34px, #94aad8 34px 36px); }
.month { grid-row: 1; grid-column: 30; justify-self: end; width: 2px; background: #000; z-index: 2; }
.merged .month { margin-bottom: -2px; }
.cursor { grid-row: 1; grid-column: 5; margin: -2px 0 0 -2px; border: 3px solid #3a73e0; z-index: 3; position: relative; }
.cursor::after { content: ""; position: absolute; right: -10px; bottom: -10px; width: 15px; height: 15px; border-radius: 50%; background: #2759cd; }
.pick { position: relative; z-index: 3; }
.pick .timeline { clip-path: inset(-2px 0 -12px 0); }

.vscroll { width: 21px; border-left: 1px solid #e1e1e1; display: flex; flex-direction: column; }
.vtop { height: 193px; background: #f8f8f8; }
.vscroll .handle { height: 7px; background: #d9dde8; }
.vscroll .thumb { height: 48px; margin: 5px 0 auto 2px; border-radius: 9px; background: #dadce0; }
.arrow { background: #f8f8f8; fill: #8f8f8f; display: grid; place-items: center; }
.vscroll .arrow { height: 28px; border-top: 1px solid #d9d9d9; }
.arrow svg { width: 12px; height: 12px; }
.up { transform: scaleY(-1); }
.left { transform: rotate(90deg); }
.right { transform: rotate(-90deg); }
.hscroll { height: 23px; background: #fff; border-top: 2px solid #e1e1e1; border-bottom: 2px solid #e1e1e1; display: grid; grid-template-columns: 879px 6px 1817px 28px 28px 21px; padding-bottom: 2px; }
.hleft, .hscroll .corner { background: #f8f8f8; }
.hscroll .handle { background: #d9dde8; }
.track .thumb { width: 246px; height: 16px; margin: 1px 0 0 5px; border-radius: 8px; background: #dadce0; }
.hscroll .arrow { border-left: 1px solid #d9d9d9; }

.side { flex: 1; display: flex; flex-direction: column; align-items: center; padding: 22px 0 0 0; }
.side svg { width: 34px; height: 34px; margin-bottom: 66.500px; }
.side hr { width: 36px; height: 1px; border: 0; background: #d0d0d0; margin: -3px 0 65px; }
.side .add { width: 24px; height: 24px; margin: 0; }

.sheettabs { height: 66px; display: grid; grid-template-columns: 70px 76px 188px 263px 430px 332px 151px 1fr; align-items: center; padding-left: 92px; font-family: "Liberation Sans", "Noto Sans CJK JP", sans-serif; color: #444746; font-size: 25.600px; }
.sheettabs > svg { width: 36px; height: 36px; }
.st { display: flex; align-items: center; justify-content: space-between; height: 66px; white-space: nowrap; padding: 0 18px 0 22px; }
.st.on { background: #e1e9f7; color: #2457cc; fill: #2457cc; font-weight: 700; font-size: 25px; }
.sheettabs .expand { width: 28px; height: 28px; margin: -34px 35px 0 auto; }
```
FILE: sheet.js
```js
// Rows of the schedule: number, name, start, close, owner, tint, first day index, end index, state
const rows = [
  [9, 'その他', '', '', '', ''],
  [10, 'LINKEY Plus HP 更新PJ', '2024/07/01', '2024/10/01', '田中', 'yellow', 0, 31, 'go'],
  [11, 'ペットカメラPJ', '2024/09/02', '', '竹居', 'leaf', 1, 52, 'go'],
  [12, '新Web改修PJ', '2024/09/02', '', '田中', 'yellow', 1, 52, 'go'],
  [13, 'FinelinkパンフPJ', '2024/09/02', '', '竹居', 'leaf', 1, 52, 'go'],
  [14, 'L+ メディア出稿', '2024/09/02', '', '田中', 'yellow', 1, 52, 'go'],
  [15, 'マーケ研修', '2024/09/02', '2024/09/02', '栗原', 'purple', 1, 2, 'done'],
  [16, 'マーケ新体制移行', '2024/09/02', '2024/09/02', '栗原', 'purple', 1, 2, 'done'],
  [17, 'IS 研修 PJ', '2024/09/03', '2024/11/12', '小松', 'orange', 2, 52, 'done'],
  [18, 'LoRa社内調査', '2024/09/03', '', '松島', 'sky', 2, 52, 'go'],
  [19, 'ITreview レビューキャンペーン', '2024/09/04', '', '田中', 'yellow', 3, 52, 'go'],
  [20, 'Zenken', '2024/09/05', '', '竹居', 'leaf', 4, 52, 'go'],
  [21, 'マーケ東京集会', '2024/09/05', '2024/11/11', '栗原', 'purple', 4, 52, 'done'],
  [22, 'HubSpot 運用改善', '2024/09/06', '', '小松', 'orange', 5, 52, 'go'],
  [23, '本番PJ', '2024/09/06', '2024/10/29', '栗原', 'purple', 5, 52, 'done'],
  [24, 'データ計測・集計', '2024/09/06', '', '田中', 'yellow', 5, 52, 'go'],
  [25, 'マーケ月次定例会', '2024/09/09', '', '栗原', 'purple', 8, 52, 'go'],
  [26, '制作パートナー獲得', '2024/09/26', '', '竹居', 'leaf', 25, 52, 'go'],
  [27, 'FAQ一元管理', '2024/09/27', '', '小松', 'orange', 26, 52, 'go'],
  [28, 'IS 営業部連携 PJ', '2024/10/01', '2024/12/31', '田中', 'yellow', 30, 52, 'go'],
  [29, '全管協ビジナビの更新', '2024/10/03', '', '松島', 'sky', 32, 52, 'go'],
  [30, '新ヘルプページ移行', '2024/10/03', '2024/10/17', '小松', 'orange', 32, 47, 'done'],
  [31, 'L+4周年記念', '2024/10/03', '', '松島', 'sky', 32, 52, 'go'],
  [32, '導入事例取材PJ', '2024/10/08', '', '松島', 'sky', 37, 52, 'go'],
  [33, 'システム連携資料化', '2024/10/15', '', '松島', 'sky', 44, 52, 'go'],
  [34, 'LoRa LP作成', '2024/11/05', '', '松島', 'sky']
];

const caret = '<svg><use href="#caret"/></svg>';
const seg = (from, to, kind) => `<i class="seg ${kind}" style="grid-column:${from + 1}/${to + 1}"></i>`;
const weekends = [[0, 1], [6, 8], [13, 15], [20, 22], [27, 29], [34, 36], [41, 43], [48, 50]]
  .map(([a, b]) => seg(a, b, 'wk')).join('');
const month = '<i class="month"></i>';

function row(n, cells, timeline, cls = '', lineCls = 'lines') {
  const [a, b, c, d] = cells;
  return `<div class="row ${cls}"><div class="rn">${n}</div><div class="cell">${a}</div>` +
    `<div class="cell ${/^2/.test(b) ? 'r' : ''}">${b}</div><div class="cell ${/^2/.test(c) ? 'r' : ''}">${c}</div>` +
    `<div class="cell d">${d}</div><div class="bar"></div><div class="timeline ${lineCls}">${timeline}${month}</div></div>`;
}

const colName = i => (i >= 26 ? String.fromCharCode(64 + Math.floor(i / 26)) : '') + String.fromCharCode(65 + i % 26);
let cols = '', days = '';
for (let i = 0; i < 52; i++) {
  const day = i < 30 ? i + 1 : i - 29;
  cols += `<span>${colName(i + 5)}</span>`;
  days += `<span class="day ${day > 9 ? 'two' : ''}" style="grid-column:${i + 1}">${day}</span>`;
}

const merged = (a, b) => `<span style="grid-column:1/31;grid-row:1">${a}</span><span style="grid-column:31/53;grid-row:1">${b}</span>`;

document.getElementById('frozen').innerHTML =
  `<div class="row head"><div class="corner"></div><div>A</div><div>B</div><div>C</div><div class="d">D${caret}</div><div class="bar"></div><div class="timeline">${cols}${caret}</div></div>` +
  row('3' + caret, ['', '', '', 'Year'], merged('2024', '2024'), '', 'merged') +
  row(4, ['', '', '', 'Month'], merged('9', '10'), '', 'merged') +
  row(5, ['', '', '', 'Day'], weekends + days + '<i class="cursor"></i>', 'pick') +
  row(6, ['PJ 名', '開始日', 'クローズ日', '担当'], weekends);

document.getElementById('rows').innerHTML = rows.map(([n, name, start, close, owner, tint, from, to, state]) =>
  row(n, [name, start, close, owner], weekends + (state ? seg(from, to, state) : ''), tint ? 'tint ' + tint : '')).join('');
```
